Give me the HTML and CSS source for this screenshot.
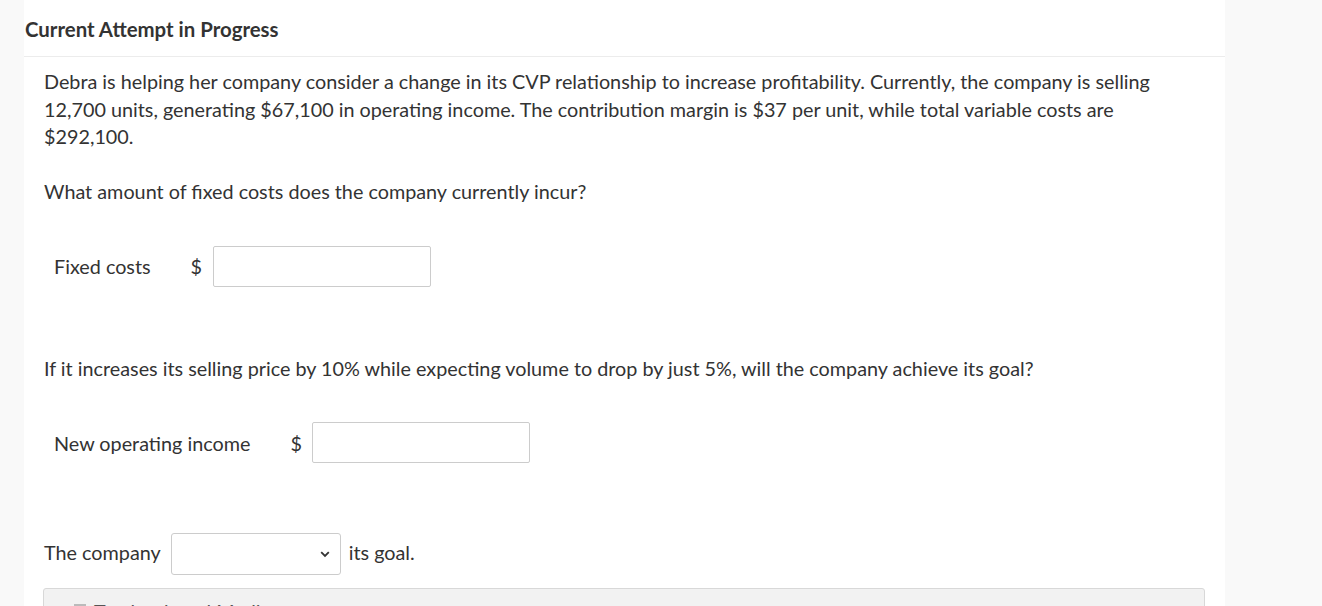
FILE: index.html
```html
<!DOCTYPE html>
<html lang="en">
<head>
<meta charset="utf-8">
<title>Current Attempt in Progress</title>
<link rel="stylesheet" href="styles.css">
</head>
<body>
<div class="page">
  <div class="header">Current Attempt in Progress</div>
  <div class="content">
    <p class="para">Debra is helping her company consider a change in its CVP relationship to increase profitability. Currently, the company is selling 12,700 units, generating $67,100 in operating income. The contribution margin is $37 per unit, while total variable costs are $292,100.</p>
    <p class="question q1">What amount of fixed costs does the company currently incur?</p>
    <div class="row row1">
      <span class="label">Fixed costs</span>
      <span class="dollar">$</span>
      <span class="input"></span>
    </div>
    <p class="question q2">If it increases its selling price by 10% while expecting volume to drop by just 5%, will the company achieve its goal?</p>
    <div class="row row2">
      <span class="label">New operating income</span>
      <span class="dollar">$</span>
      <span class="input"></span>
    </div>
    <div class="sentence">
      <span class="stext">The company</span>
      <span class="select">
        <svg class="chev" width="10" height="7" viewBox="0 0 10 7"><path d="M1.2 1.2 L5 5 L8.8 1.2" fill="none" stroke="#333" stroke-width="1.8"/></svg>
      </span>
      <span class="stext">its goal.</span>
    </div>
    <div class="media">
      <span class="media-icon"></span>
      <span class="media-text">Textbook and Media</span>
    </div>
  </div>
</div>
</body>
</html>
```

FILE: styles.css
```css
html, body {
  margin: 0;
  padding: 0;
  background: #f9f9f9;
  height: 606px;
  overflow: hidden;
}
body {
  font-family: Lato, "Open Sans", sans-serif;
  color: #333;
}
.page {
  margin-left: 24px;
  width: 1201px;
  height: 606px;
  background: #fff;
  overflow: hidden;
}
.header {
  box-sizing: border-box;
  height: 57px;
  padding: 17px 0 0 1px;
  font-size: 20.4px;
  line-height: 24px;
  font-weight: 700;
  border-bottom: 1px solid #ececec;
}
.content {
  padding: 11px 0 0 20px;
  width: 1161px;
}
.para {
  margin: 0;
  width: 1140px;
  font-size: 19.8px;
  line-height: 27.5px;
}
.question {
  margin: 0;
  font-size: 19.8px;
  line-height: 27.5px;
}
.q1 { margin-top: 27.5px; }
.q2 { margin-top: 68px; }
.row {
  display: flex;
  align-items: center;
  padding-left: 10px;
  font-size: 19.8px;
}
.row1 { margin-top: 40px; }
.row2 { margin-top: 40px; }
.label { margin-right: 40px; }
.dollar { width: 12px; margin-right: 10px; }
.input {
  box-sizing: border-box;
  width: 218px;
  height: 41px;
  border: 1px solid #ccc;
  border-radius: 2px;
  background: #fff;
}
.sentence {
  display: flex;
  align-items: center;
  margin-top: 70px;
  font-size: 19.8px;
}
.stext { position: relative; top: -2px; }
.select {
  box-sizing: border-box;
  width: 170px;
  height: 42px;
  margin: 0 8px 0 10px;
  border: 1px solid #ccc;
  border-radius: 3px;
  display: flex;
  align-items: center;
  justify-content: flex-end;
  padding-right: 10px;
}
.chev { display: block; }
.media {
  box-sizing: border-box;
  margin-top: 13px;
  margin-left: -1px;
  width: 1162px;
  height: 60px;
  background: #f2f2f2;
  border: 1px solid #d8d8d8;
  border-radius: 3px;
  padding: 10px 0 0 30px;
  display: flex;
  align-items: flex-start;
  color: #555;
  font-size: 19.8px;
  line-height: 24px;
}
.media-icon {
  display: inline-block;
  width: 12px;
  height: 14px;
  background: #bbb;
  margin: 5px 8px 0 0;
}
```
